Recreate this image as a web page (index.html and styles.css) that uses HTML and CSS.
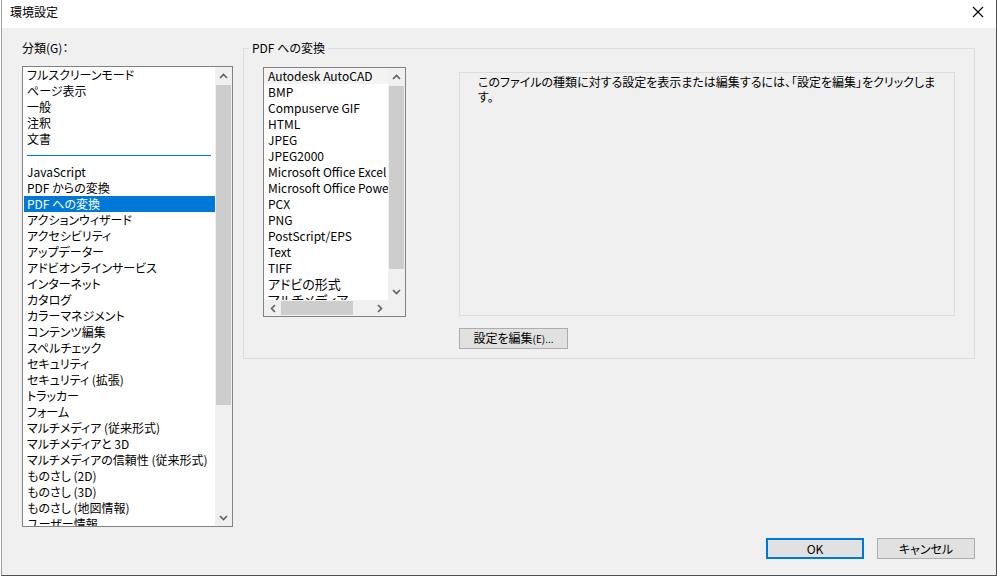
FILE: index.html
```html
<!DOCTYPE html>
<html>

<head>
  <meta charset="UTF-8">
  <meta name="viewport" content="width=device-width, initial-scale=1.0">
  <title>環境設定</title>

  <link rel="stylesheet" href="styles.css">
</head>

<body>
  <div class="window">
    <div class="titlebar">
      <span class="title ja">環境設定</span>
      <svg class="close" width="12" height="12" viewBox="0 0 12 12">
        <path d="M1 1 L11 11 M11 1 L1 11" stroke="#000" stroke-width="1.1" fill="none" />
      </svg>
    </div>

    <div class="content">
      <div class="main">
        <div class="leftcolumn">
          <div class="label ja">分類(G)：</div>
          <div class="listbox catlist">
            <div class="items ja">
              <div class="item">フルスクリーンモード</div>
              <div class="item">ページ表示</div>
              <div class="item">一般</div>
              <div class="item">注釈</div>
              <div class="item">文書</div>
              <div class="separator"></div>
              <div class="item">JavaScript</div>
              <div class="item">PDF からの変換</div>
              <div class="item selected">PDF への変換</div>
              <div class="item">アクションウィザード</div>
              <div class="item">アクセシビリティ</div>
              <div class="item">アップデーター</div>
              <div class="item">アドビオンラインサービス</div>
              <div class="item">インターネット</div>
              <div class="item">カタログ</div>
              <div class="item">カラーマネジメント</div>
              <div class="item">コンテンツ編集</div>
              <div class="item">スペルチェック</div>
              <div class="item">セキュリティ</div>
              <div class="item">セキュリティ (拡張)</div>
              <div class="item">トラッカー</div>
              <div class="item">フォーム</div>
              <div class="item">マルチメディア (従来形式)</div>
              <div class="item">マルチメディアと 3D</div>
              <div class="item">マルチメディアの信頼性 (従来形式)</div>
              <div class="item">ものさし (2D)</div>
              <div class="item">ものさし (3D)</div>
              <div class="item">ものさし (地図情報)</div>
              <div class="item">ユーザー情報</div>
            </div>
            <div class="vscroll catscroll">
              <div class="arrow">
                <svg width="9" height="6" viewBox="0 0 9 6"><path d="M1 5 L4.5 1.5 L8 5" stroke="#606060" stroke-width="1.6" fill="none" /></svg>
              </div>
              <div class="track"><div class="thumb"></div></div>
              <div class="arrow">
                <svg width="9" height="6" viewBox="0 0 9 6"><path d="M1 1 L4.5 4.5 L8 1" stroke="#606060" stroke-width="1.6" fill="none" /></svg>
              </div>
            </div>
          </div>
        </div>

        <div class="groupbox">
          <div class="legend ja">PDF への変換</div>
          <div class="groupinner">
            <div class="listbox typelist">
              <div class="typebody">
                <div class="items types">
                  <div class="item hover">Autodesk AutoCAD</div>
                  <div class="item">BMP</div>
                  <div class="item">Compuserve GIF</div>
                  <div class="item">HTML</div>
                  <div class="item">JPEG</div>
                  <div class="item">JPEG2000</div>
                  <div class="item">Microsoft Office Excel</div>
                  <div class="item">Microsoft Office PowerPoint</div>
                  <div class="item">PCX</div>
                  <div class="item">PNG</div>
                  <div class="item">PostScript/EPS</div>
                  <div class="item">Text</div>
                  <div class="item">TIFF</div>
                  <div class="item ja big">アドビの形式</div>
                  <div class="item ja big">マルチメディア</div>
                </div>
                <div class="vscroll typescroll">
                  <div class="arrow">
                    <svg width="9" height="6" viewBox="0 0 9 6"><path d="M1 5 L4.5 1.5 L8 5" stroke="#606060" stroke-width="1.6" fill="none" /></svg>
                  </div>
                  <div class="track"><div class="thumb"></div></div>
                  <div class="arrow">
                    <svg width="9" height="6" viewBox="0 0 9 6"><path d="M1 1 L4.5 4.5 L8 1" stroke="#606060" stroke-width="1.6" fill="none" /></svg>
                  </div>
                </div>
              </div>
              <div class="hscroll">
                <div class="harrow">
                  <svg width="6" height="9" viewBox="0 0 6 9"><path d="M5 1 L1.5 4.5 L5 8" stroke="#606060" stroke-width="1.6" fill="none" /></svg>
                </div>
                <div class="htrack"><div class="hthumb"></div></div>
                <div class="harrow">
                  <svg width="6" height="9" viewBox="0 0 6 9"><path d="M1 1 L4.5 4.5 L1 8" stroke="#606060" stroke-width="1.6" fill="none" /></svg>
                </div>
                <div class="corner"></div>
              </div>
            </div>

            <div class="detail">
              <div class="infobox">
                <p class="info ja">このファイルの種類に対する設定を表示または編集するには、「設定を編集」をクリックします。</p>
              </div>
              <button class="btn editbtn ja">設定を編集<span class="acc">(E)...</span></button>
            </div>
          </div>
        </div>
      </div>

      <div class="footer">
        <button class="btn okbtn">OK</button>
        <button class="btn ja">キャンセル</button>
      </div>
    </div>
  </div>
</body>

</html>
```

FILE: styles.css
```css
* {
  box-sizing: border-box;
}

body {
  margin: 0;
  background: #ffffff;
  font-family: "Noto Sans CJK JP", "Noto Sans", sans-serif;
  font-size: 12px;
  color: #000;
}

.ja {
  font-feature-settings: "palt" 1;
}

.window {
  width: 996px;
  height: 576px;
  margin-left: 1px;
  border-left: 1px solid #a0a0a0;
  border-right: 1px solid #505050;
  border-bottom: 1px solid #505050;
  background: #f0f0f0;
  display: flex;
  flex-direction: column;
}

.titlebar {
  height: 28px;
  background: #ffffff;
  display: flex;
  align-items: center;
  justify-content: space-between;
  padding: 0 10px 4px 8px;
}

.title {
  font-size: 12px;
  line-height: 16px;
}

.close {
  margin-right: 2px;
}

.content {
  padding: 12px 21px 0 20px;
}

.main {
  display: flex;
  gap: 10px;
}

.leftcolumn {
  width: 211px;
}

.label {
  height: 26px;
  line-height: 16px;
}

.listbox {
  background: #ffffff;
  border: 1px solid #828282;
  position: relative;
}

.catlist {
  height: 461px;
  display: flex;
  overflow: hidden;
}

.items {
  flex: 1;
  overflow: hidden;
  line-height: 16px;
  white-space: nowrap;
}

.item {
  height: 16px;
  padding-left: 3px;
  margin-left: 1px;
}

.item.selected {
  background: #0078d7;
  color: #ffffff;
}

.item.hover {
  background: #f3f3f3;
}

.separator {
  height: 17px;
  padding: 8px 4px 0 4px;
}

.separator:after {
  content: "";
  display: block;
  height: 1px;
  background: #0078d7;
}

.vscroll {
  width: 17px;
  background: #f0f0f0;
  display: flex;
  flex-direction: column;
}

.arrow {
  height: 17px;
  display: flex;
  align-items: center;
  justify-content: center;
}

.track {
  flex: 1;
  padding: 1px 1px;
}

.thumb {
  background: #cdcdcd;
}

.catscroll .thumb {
  height: 320px;
}

.groupbox {
  width: 732px;
  height: 311px;
  margin-top: 8px;
  border: 1px solid #dcdcdc;
  position: relative;
}

.legend {
  position: absolute;
  top: -9px;
  left: 5px;
  padding: 0 3px;
  background: #f0f0f0;
  line-height: 16px;
}

.groupinner {
  display: flex;
  padding: 18px 0 0 19px;
  gap: 53px;
}

.typelist {
  width: 143px;
  height: 250px;
  display: flex;
  flex-direction: column;
}

.typebody {
  height: 232px;
  display: flex;
}

.types .item {
  margin-left: 0;
  padding-left: 4px;
}

.big {
  font-size: 13px;
  overflow: hidden;
}

.typescroll .thumb {
  height: 183px;
}

.hscroll {
  height: 16px;
  display: flex;
  background: #f0f0f0;
}

.harrow {
  width: 17px;
  display: flex;
  align-items: center;
  justify-content: center;
}

.htrack {
  flex: 1;
  padding: 1px 0;
}

.hthumb {
  width: 72px;
  height: 14px;
  background: #cdcdcd;
}

.corner {
  width: 17px;
  background: #f0f0f0;
}

.detail {
  padding-top: 5px;
}

.infobox {
  width: 496px;
  height: 244px;
  border: 1px solid #dcdcdc;
  padding: 1px 0 0 18px;
}

.info {
  margin: 0;
  width: 463px;
  line-height: 15px;
}

.btn {
  font-family: "Noto Sans CJK JP", "Noto Sans", sans-serif;
  font-size: 12px;
  line-height: 16px;
  height: 21px;
  padding: 0;
  background: #e1e1e1;
  border: 1px solid #adadad;
  color: #000;
}

.editbtn {
  margin-top: 12px;
  width: 109px;
}

.acc {
  font-size: 10px;
}

.footer {
  display: flex;
  justify-content: flex-end;
  gap: 13px;
  margin-top: 11px;
}

.footer .btn {
  width: 98px;
}

.okbtn {
  border: 2px solid #0078d7;
}
```
